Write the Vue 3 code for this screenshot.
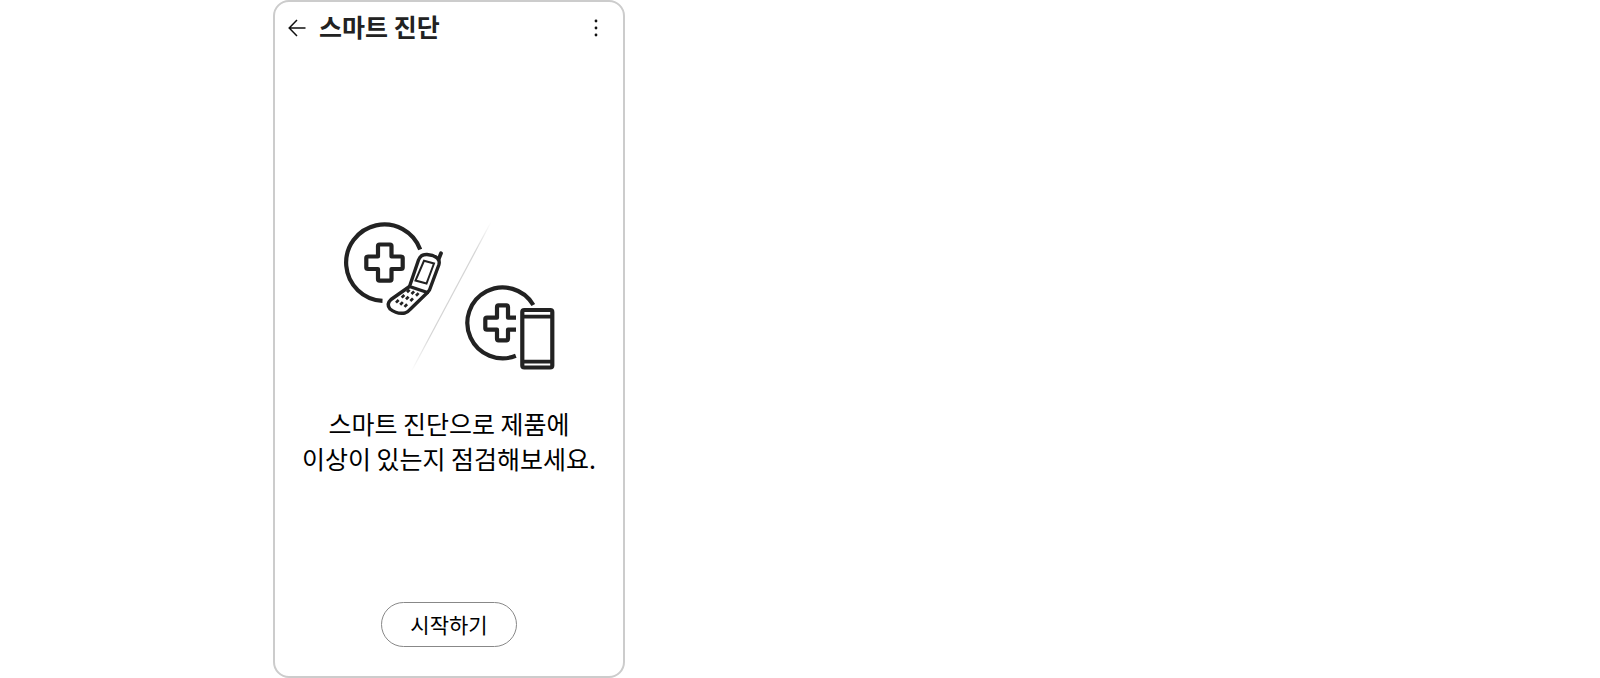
<script setup>
const title = '스마트 진단'
const lines = ['스마트 진단으로 제품에', '이상이 있는지 점검해보세요.']
const keys = [
  [408.3, 291], [412.8, 292.7], [417.3, 294.4],
  [403, 296.3], [407.3, 298], [411.7, 299.7],
  [397.3, 301.3], [401.5, 303.4], [405.8, 305.6],
]
</script>

<template>
  <div class="page">
    <main class="phone">
      <header class="bar">
        <button class="icon-button" type="button" aria-label="뒤로">
          <svg width="18" height="18" viewBox="0 0 18 18" fill="none" stroke="#111" stroke-width="1.5">
            <path d="M17.5 9H1.5M9 1L1.2 9L9 17" />
          </svg>
        </button>
        <h1 class="title">{{ title }}</h1>
        <button class="icon-button" type="button" aria-label="더보기">
          <svg width="18" height="18" viewBox="0 0 18 18" fill="#111">
            <circle cx="9" cy="2" r="1.4" />
            <circle cx="9" cy="9" r="1.4" />
            <circle cx="9" cy="16" r="1.4" />
          </svg>
        </button>
      </header>

      <section class="intro">
        <svg class="art" width="220" height="156" viewBox="339 218 220 156" fill="none" stroke="#222" stroke-width="4.2" aria-hidden="true">
          <defs>
            <linearGradient id="fade" gradientUnits="userSpaceOnUse" x1="491" y1="222" x2="411" y2="372">
              <stop offset="0" stop-color="#d4d4d4" stop-opacity="0" />
              <stop offset="0.2" stop-color="#d4d4d4" />
              <stop offset="0.75" stop-color="#d4d4d4" />
              <stop offset="1" stop-color="#d4d4d4" stop-opacity="0" />
            </linearGradient>
          </defs>
          <path d="M491 222L411 372" stroke="url(#fade)" stroke-width="1.2" />

          <path d="M420.2 249.5A38.2 38.2 0 1 0 382.5 300.8" />
          <path stroke-linejoin="round" d="M379.5 244.5H390Q391.5 244.5 391.5 246V256.5H401Q402.7 256.5 402.7 258V267.5Q402.7 269 401 269H391.5V279Q391.5 280.7 390 280.7H379.5Q378 280.7 378 279V269H368Q366.3 269 366.3 267.5V258Q366.3 256.5 368 256.5H378V246Q378 244.5 379.5 244.5Z" />
          <g stroke-width="3.4" stroke-linejoin="round" stroke-linecap="round">
            <path d="M409.5 286.5L418.5 260Q420.5 254.3 427 254.5Q434 255 437.8 258.5Q440 261 438.8 265L429.5 290L427.5 292.5Z" />
            <path d="M409.5 286.5L391 299.5Q386 304 390 309Q397 314.5 405 313Q408 312 410 309.5L427.5 292.5" />
            <path d="M438.5 259.5L441 253.3" stroke-width="3.8" />
            <path d="M424 260.8L434 263.5L426.5 283.5L415.5 280.5Z" stroke-width="2" stroke-linejoin="miter" />
          </g>
          <path v-for="([x, y], i) in keys" :key="i" :d="`M${x - 1.3} ${y + 1.3}L${x + 1.3} ${y - 1.3}`" stroke-width="2.7" />

          <path d="M533.3 305A35.4 35.4 0 1 0 515.8 355.8" />
          <path stroke-linejoin="round" d="M516 317.7H508V307Q508 305.3 506.5 305.3H498.5Q497 305.3 497 307V317.7H487Q485.3 317.7 485.3 319.2V328.2Q485.3 329.7 487 329.7H497V338.7Q497 340.3 498.5 340.3H506.5Q508 340.3 508 338.7V329.7H516" />
          <rect x="522.3" y="310" width="30" height="57.5" rx="2" />
          <path d="M522 316.7H552M522 361.7H552" stroke-width="3.8" />
        </svg>
        <p class="message">
          <span v-for="line in lines" :key="line">{{ line }}</span>
        </p>
      </section>

      <footer class="actions">
        <button class="start" type="button">시작하기</button>
      </footer>
    </main>
  </div>
</template>

<style>
body {
  background: #fff;
}
</style>

<style scoped>
.page {
  box-sizing: border-box;
  min-height: 100vh;
  padding-left: 273px;
  display: flex;
  font-family: "Noto Sans CJK KR", sans-serif;
  color: #000;
}
.phone {
  box-sizing: border-box;
  width: 100%;
  max-width: 352px;
  border: 2px solid #ccc;
  border-radius: 16px;
  display: flex;
  flex-direction: column;
}
.bar {
  display: flex;
  align-items: center;
  height: 52px;
  padding: 0 18px 0 13px;
}
.icon-button {
  display: flex;
  padding: 0;
  border: 0;
  background: none;
  cursor: pointer;
}
.title {
  flex: 1;
  margin: 0;
  padding: 0 0 4px 13px;
  font-size: 25px;
  line-height: 36px;
  font-weight: 700;
  color: #222;
}
.intro {
  flex: 1;
  display: flex;
  flex-direction: column;
  align-items: center;
  justify-content: center;
  gap: 32px;
  padding-top: 38px;
}
.art {
  display: block;
}
.message {
  margin: 0;
  font-size: 25px;
  line-height: 35px;
  text-align: center;
}
.message span {
  display: block;
  white-space: nowrap;
}
.actions {
  display: flex;
  justify-content: center;
  padding-bottom: 29px;
}
.start {
  box-sizing: border-box;
  height: 45px;
  padding: 0 28px 2px;
  border: 1px solid #888;
  border-radius: 23px;
  background: #fff;
  color: #000;
  font-family: inherit;
  font-size: 21px;
  line-height: 30px;
  cursor: pointer;
}
</style>
